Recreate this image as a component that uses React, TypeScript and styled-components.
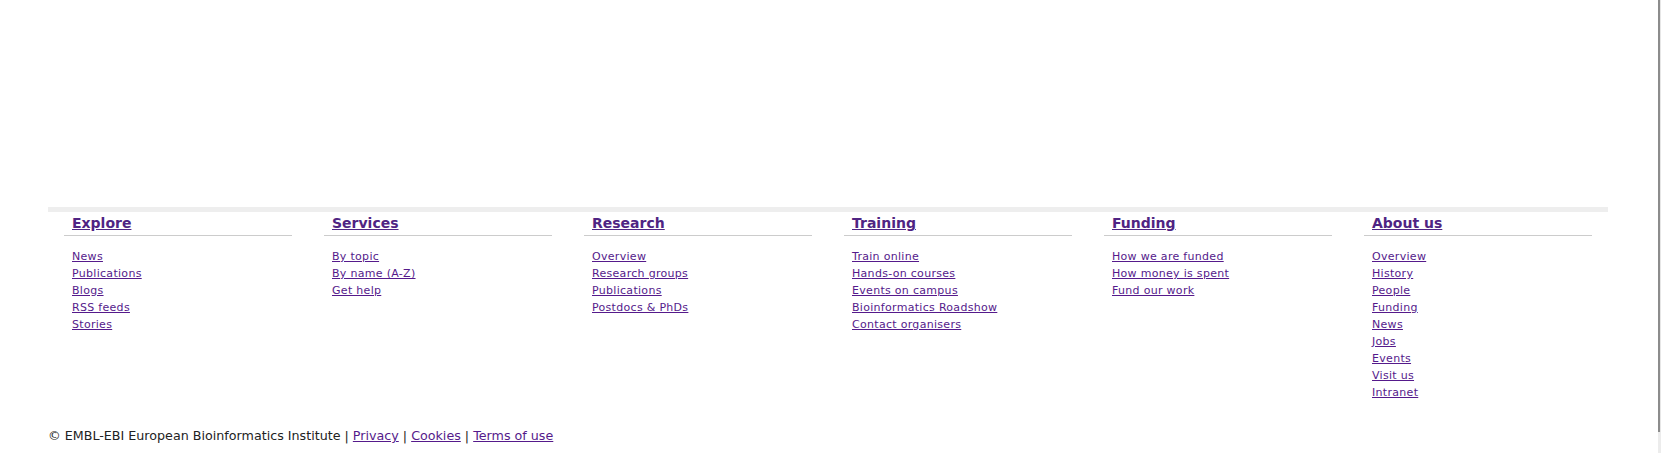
import React from 'react';
import styled, { createGlobalStyle } from 'styled-components';

const GlobalStyle = createGlobalStyle`
  html, body {
    margin: 0;
    padding: 0;
    background: #ffffff;
  }
  body {
    font-family: "DejaVu Sans", Verdana, sans-serif;
    color: #222222;
  }
`;

interface FooterSection {
  title: string;
  links: string[];
}

const sections: FooterSection[] = [
  { title: 'Explore', links: ['News', 'Publications', 'Blogs', 'RSS feeds', 'Stories'] },
  { title: 'Services', links: ['By topic', 'By name (A-Z)', 'Get help'] },
  { title: 'Research', links: ['Overview', 'Research groups', 'Publications', 'Postdocs & PhDs'] },
  {
    title: 'Training',
    links: ['Train online', 'Hands-on courses', 'Events on campus', 'Bioinformatics Roadshow', 'Contact organisers'],
  },
  { title: 'Funding', links: ['How we are funded', 'How money is spent', 'Fund our work'] },
  {
    title: 'About us',
    links: ['Overview', 'History', 'People', 'Funding', 'News', 'Jobs', 'Events', 'Visit us', 'Intranet'],
  },
];

// Layout
const Page = styled.div`
  display: flex;
  width: 1661px;
  height: 453px;
  overflow: hidden;
`;

const Main = styled.main`
  flex: 1;
  padding-top: 207px;
`;

const WindowEdge = styled.div`
  width: 3px;
  display: flex;
  flex-direction: column;
`;

const EdgeLine = styled.div`
  height: 432px;
  border-left: 2px solid #8c8c8c;
  background: #e6e6e6;
`;

const EdgeCorner = styled.div`
  flex: 1;
  background: #ececec;
`;

const Footer = styled.footer`
  margin-left: 48px;
  width: 1560px;
`;

const TopBand = styled.div`
  height: 5px;
  background: #eeeeee;
`;

const Columns = styled.div`
  display: grid;
  grid-template-columns: repeat(6, 260px);
  align-items: start;
`;

const Column = styled.nav`
  padding: 0 16px;
`;

const Heading = styled.h3`
  margin: 1px 0 0;
  padding: 0 0 2px 8px;
  font-size: 14px;
  font-weight: bold;
  line-height: 20px;
  border-bottom: 1px solid #cccccc;

  a {
    color: #4f2483;
  }
`;

const LinkList = styled.ul`
  list-style: none;
  margin: 12px 0 0;
  padding: 0 0 0 8px;
`;

const LinkItem = styled.li`
  font-size: 11px;
  line-height: 17px;
  letter-spacing: 0.3px;
`;

const FooterLink = styled.a`
  color: #551a8b;
  text-decoration: underline;
`;

const Legal = styled.p`
  margin: 25px 0 0;
  font-size: 12.7px;
  line-height: 19px;
  color: #222222;
`;

const App: React.FC = () => {
  return (
    <>
      <GlobalStyle />
      <Page>
        <Main>
          <Footer>
            <TopBand />
            <Columns>
              {sections.map(section => (
                <Column key={section.title}>
                  <Heading>
                    <FooterLink href="#">{section.title}</FooterLink>
                  </Heading>
                  <LinkList>
                    {section.links.map(link => (
                      <LinkItem key={link}>
                        <FooterLink href="#">{link}</FooterLink>
                      </LinkItem>
                    ))}
                  </LinkList>
                </Column>
              ))}
            </Columns>
            <Legal>
              © EMBL-EBI European Bioinformatics Institute | <FooterLink href="#">Privacy</FooterLink> |{' '}
              <FooterLink href="#">Cookies</FooterLink> | <FooterLink href="#">Terms of use</FooterLink>
            </Legal>
          </Footer>
        </Main>
        <WindowEdge>
          <EdgeLine />
          <EdgeCorner />
        </WindowEdge>
      </Page>
    </>
  );
};

export default App;
